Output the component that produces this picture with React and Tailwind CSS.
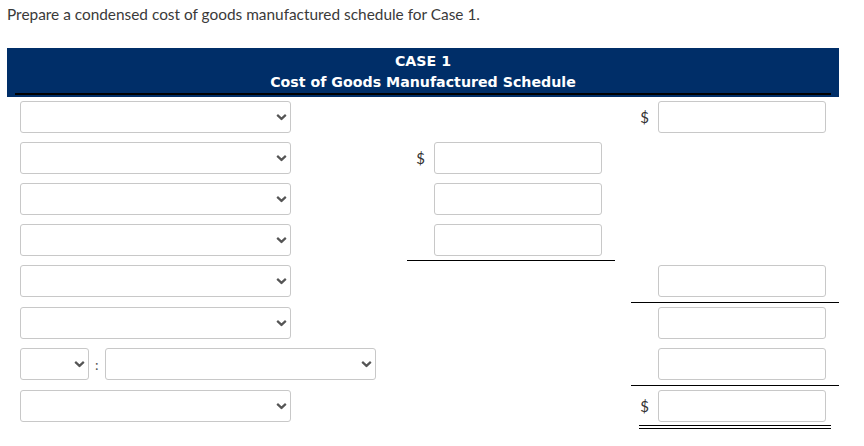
import { Fragment } from 'react'

const fieldCls =
  'h-[32px] rounded-[3px] border border-[#c8c8c8] bg-white'

function Chevron() {
  return (
    <svg
      className="pointer-events-none absolute right-[4px] top-1/2 -translate-y-1/2"
      width="11"
      height="7"
      viewBox="0 0 11 7"
      aria-hidden
    >
      <path d="M1.2 1.4 L5.5 5.4 L9.8 1.4" fill="none" stroke="#555" strokeWidth="2.2" />
    </svg>
  )
}

/** 드롭다운 (네이티브 화살표 대신 직접 그린 셰브런) */
function Select({ width }) {
  return (
    <div className="relative" style={{ width }}>
      <select className={`${fieldCls} w-full appearance-none`} />
      <Chevron />
    </div>
  )
}

function Amount({ dollar }) {
  return (
    <div className="flex items-center justify-end pr-[13px]">
      {dollar && <span className="mr-[9px] text-[15px] text-[#333]">$</span>}
      <input type="text" className={`${fieldCls} w-[168px]`} />
    </div>
  )
}

// 행 정의: h = 행 높이, mid/right = 금액 칸, line = 밑줄 위치
const ROWS = [
  { h: 41, right: 'dollar' },
  { h: 41, mid: 'dollar' },
  { h: 41, mid: 'plain' },
  { h: 41, mid: 'plain', line: 'mid' },
  { h: 42, right: 'plain', line: 'right' },
  { h: 41, right: 'plain' },
  { h: 42, right: 'plain', line: 'right', split: true },
  { h: 42, right: 'dollar', double: true },
]

export default function App() {
  return (
    <div className="w-[864px] bg-white pb-4 font-['Lato',sans-serif] text-[#333]">
      <p className="px-[7px] pt-[4px] text-[15.4px] leading-[20px] text-[#3a3a3a]">
        Prepare a condensed cost of goods manufactured schedule for Case 1.
      </p>

      <div className="ml-[7px] mt-[24px] w-[832px]">
        {/* ── 헤더 ── */}
        <div className="bg-[#002e68] px-2 pt-[3px] pb-[2px] text-center font-['DejaVu_Sans',sans-serif] text-[14.2px] font-bold leading-[21px] text-white">
          <div>CASE 1</div>
          <div className="border-b-2 border-black">Cost of Goods Manufactured Schedule</div>
        </div>

        {/* ── 본문 행 ── */}
        {ROWS.map((r, i) => (
          <div key={i} className="flex" style={{ height: r.h }}>
            <div className="w-[400px] pl-[13px] pt-[4px]">
              {r.split ? (
                <div className="flex items-center">
                  <Select width={69} />
                  <span className="mx-[6px] text-[14px] text-[#555]">:</span>
                  <Select width={271} />
                </div>
              ) : (
                <Select width={271} />
              )}
            </div>
            <div
              className={`w-[208px] pt-[4px] ${
                r.line === 'mid' ? 'border-b border-black' : ''
              }`}
            >
              {r.mid && <Amount dollar={r.mid === 'dollar'} />}
            </div>
            <div
              className={`ml-4 w-[208px] pt-[4px] ${
                r.line === 'right' ? 'border-b border-black' : ''
              }`}
            >
              {r.right && (
                <Fragment>
                  <Amount dollar={r.right === 'dollar'} />
                  {r.double && <div className="mx-2 mt-[3px] h-[4px] border-y border-black" />}
                </Fragment>
              )}
            </div>
          </div>
        ))}
      </div>
    </div>
  )
}
